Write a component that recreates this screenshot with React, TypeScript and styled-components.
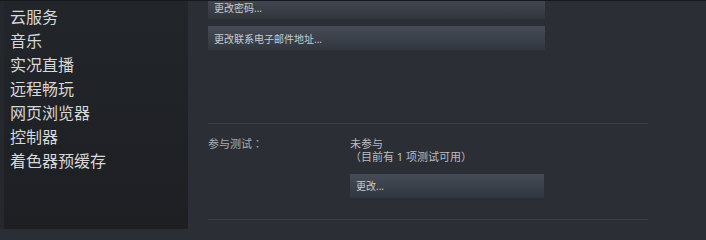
import React from 'react';
import styled, { createGlobalStyle } from 'styled-components';

const GlobalStyle = createGlobalStyle`
  html, body {
    margin: 0;
    padding: 0;
    height: 229px;
    overflow: hidden;
    background: #2b2e34;
  }
  body {
    font-family: "Noto Sans", "Noto Sans CJK SC", sans-serif;
  }
`;

const Window = styled.div`
  display: flex;
  height: 229px;
  border-top: 1px solid #17181b;
  box-sizing: border-box;
  overflow: hidden;
`;

const Sidebar = styled.nav`
  width: 188px;
  box-sizing: border-box;
  flex-shrink: 0;
  border-left: 4px solid #25282d;
  padding: 4px 0 0 6px;
  background: linear-gradient(to bottom, #222529 0%, #1d1f23 100%);
  display: flex;
  flex-direction: column;
`;

const NavItem = styled.div`
  font-size: 16px;
  line-height: 24px;
  color: #d6d8da;
  white-space: nowrap;
`;

const Main = styled.main`
  flex: 1;
  padding-left: 20px;
  background: #2b2e34;
`;

const Column = styled.div`
  width: 440px;
  margin-top: -6px;
  display: flex;
  flex-direction: column;
`;

const ActionButton = styled.div<{ $width: number; $gap?: number }>`
  width: ${(p) => p.$width}px;
  height: 24px;
  margin-top: ${(p) => p.$gap ?? 0}px;
  box-sizing: border-box;
  padding-left: 6px;
  display: flex;
  align-items: center;
  font-size: 10px;
  color: #c9ccd0;
  background: linear-gradient(to bottom, #464c57 0%, #31363e 100%);
  cursor: pointer;
`;

const Divider = styled.div<{ $gap: number }>`
  height: 1px;
  margin-top: ${(p) => p.$gap}px;
  background: #3b3e45;
`;

const SettingRow = styled.div`
  display: grid;
  grid-template-columns: 142px 1fr;
  padding: 13px 0 21px;
`;

const Label = styled.div`
  font-size: 11px;
  line-height: 13px;
  color: #a9aeb3;
`;

const Colon = styled.span`
  font-family: "Noto Sans CJK TC", sans-serif;
`;

const Value = styled.div`
  display: flex;
  flex-direction: column;
  font-size: 11px;
  line-height: 13px;
  color: #b9bdc2;
`;

const navItems = ['云服务', '音乐', '实况直播', '远程畅玩', '网页浏览器', '控制器', '着色器预缓存'];

export default function App() {
  return (
    <>
      <GlobalStyle />
      <Window>
        <Sidebar>
          {navItems.map((item) => (
            <NavItem key={item}>{item}</NavItem>
          ))}
        </Sidebar>
        <Main>
          <Column>
            <ActionButton $width={337}>更改密码...</ActionButton>
            <ActionButton $width={337} $gap={7}>
              更改联系电子邮件地址...
            </ActionButton>
            <Divider $gap={73} />
            <SettingRow>
              <Label>
                参与测试<Colon>：</Colon>
              </Label>
              <Value>
                <span>未参与</span>
                <span>（目前有 1 项测试可用）</span>
                <ActionButton $width={194} $gap={11}>
                  更改...
                </ActionButton>
              </Value>
            </SettingRow>
            <Divider $gap={0} />
          </Column>
        </Main>
      </Window>
    </>
  );
}
